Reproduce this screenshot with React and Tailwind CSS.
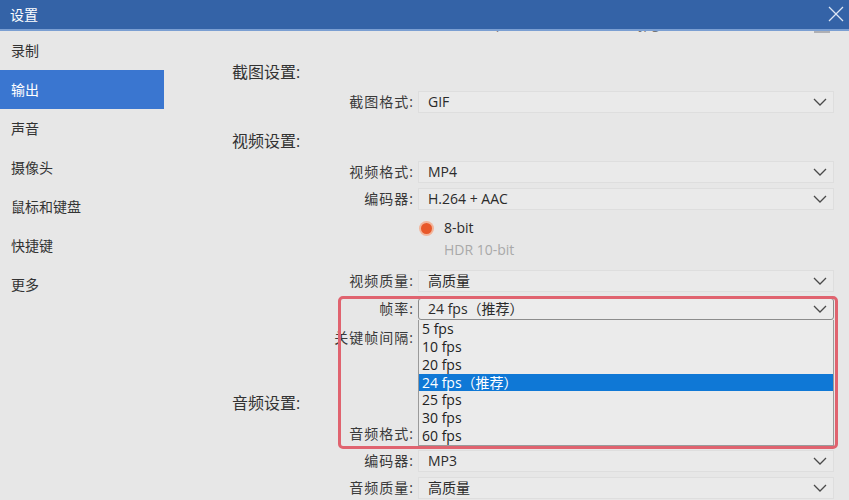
import React from "react";

const FONT = { fontFamily: '"Open Sans", "Noto Sans CJK SC", sans-serif' };

function Chevron() {
  return (
    <svg width="14" height="8" viewBox="0 0 14 8" className="shrink-0">
      <polyline points="1,1 7,7 13,1" fill="none" stroke="#4a4a4a" strokeWidth="1.3" />
    </svg>
  );
}

function Select({ value, open }) {
  return (
    <div
      className={
        "w-[416px] h-[22px] flex items-center justify-between pl-[9px] pr-[6px] " +
        (open
          ? "border border-[#8c8c8c] rounded-[3px] bg-[#ececec]"
          : "border border-[#dedede] bg-[#eaeaea]")
      }
    >
      <span className="text-[14px] text-[#2b2b2b] leading-none">{value}</span>
      <Chevron />
    </div>
  );
}

function Row({ label, value, mt, open, children }) {
  return (
    <div className={"relative flex items-center h-[22px] " + mt}>
      <div className="w-[250px] text-right text-[14px] tracking-[1px] text-[#3a3a3a] leading-none">{label}</div>
      <div className="ml-[4px]">{value !== undefined ? <Select value={value} open={open} /> : null}</div>
      {children}
    </div>
  );
}

const fpsList = ["5 fps", "10 fps", "20 fps", "24 fps（推荐）", "25 fps", "30 fps", "60 fps"];

export default function App() {
  const side = ["录制", "输出", "声音", "摄像头", "鼠标和键盘", "快捷键", "更多"];
  return (
    <div className="w-[849px] h-[500px] flex flex-col bg-[#e7e7e7] overflow-hidden" style={FONT}>
      <div className="h-[31px] shrink-0 bg-[#3463a7] border-b-2 border-[#7b9fd2] flex items-center justify-between pl-[10px]">
        <span className="text-white text-[14px] leading-none">设置</span>
        <svg width="24" height="24" viewBox="0 0 24 24" className="mr-[1px] -mt-[2px]">
          <line x1="5" y1="5" x2="19" y2="19" stroke="#dbe6f5" strokeWidth="1.2" />
          <line x1="19" y1="5" x2="5" y2="19" stroke="#dbe6f5" strokeWidth="1.2" />
        </svg>
      </div>
      <div className="flex flex-1 min-h-0">
        <aside className="w-[164px] shrink-0 flex flex-col">
          {side.map((s) => (
            <div
              key={s}
              className={
                "h-[39px] flex items-center pl-[11px] text-[14px] " +
                (s === "输出" ? "bg-[#3a76d0] text-white" : "text-[#333]")
              }
            >
              {s}
            </div>
          ))}
        </aside>
        <main className="flex-1 relative overflow-hidden flex flex-col">
          {/* cut-off row at top */}
          <div className="relative flex items-center h-[22px] -mt-[20px] opacity-60">
            <div className="w-[250px] text-right text-[14px] tracking-[1px] text-[#3a3a3a] leading-none">输出目录:</div>
            <div className="ml-[4px] w-[392px] h-[22px] flex items-center pl-[9px] text-[14px] text-[#2b2b2b]">
              C:/Users/Apowersoft/Videos/rec.jpg
            </div>
            <div className="w-[16px] h-[22px] ml-[4px] bg-[#8a8c92]" />
          </div>

          <div className="ml-[68px] mt-[27px] h-[24px] flex items-center text-[16px] text-[#333]">截图设置:</div>
          <Row label="截图格式:" value="GIF" mt="mt-[7px]" />

          <div className="ml-[68px] mt-[16px] h-[24px] flex items-center text-[16px] text-[#333]">视频设置:</div>
          <Row label="视频格式:" value="MP4" mt="mt-[8px]" />
          <Row label="编码器:" value="H.264 + AAC" mt="mt-[5px]" />

          <div className="mt-[8px] h-[20px] flex items-center pl-[255px]">
            <span className="w-[15px] h-[15px] rounded-full bg-[#f2b59b] flex items-center justify-center">
              <span className="w-[11px] h-[11px] rounded-full bg-[#e8582a]" />
            </span>
            <span className="ml-[10px] text-[14px] text-[#2b2b2b] leading-none">8-bit</span>
          </div>
          <div className="mt-[2px] h-[20px] flex items-center pl-[280px] text-[14px] text-[#a9a9a9] leading-none">
            HDR 10-bit
          </div>

          <Row label="视频质量:" value="高质量" mt="mt-[10px]" />
          <Row label="帧率:" value="24 fps（推荐）" mt="mt-[6px]" open>
            <div className="absolute left-[254px] top-[22px] w-[416px] h-[126px] z-10 bg-[#ebebeb] border-x border-b border-[#9a9a9a] flex flex-col">
              {fpsList.map((f) => (
                <div
                  key={f}
                  className={
                    "h-[18px] flex items-center pl-[3px] text-[14px] leading-none " +
                    (f === "24 fps（推荐）" ? "bg-[#0f78d6] text-white" : "text-[#222]")
                  }
                >
                  {f}
                </div>
              ))}
            </div>
          </Row>
          <Row label="关键帧间隔:" value="" mt="mt-[7px]" />

          <div className="ml-[68px] mt-[42px] h-[24px] flex items-center text-[16px] text-[#333]">音频设置:</div>
          <Row label="音频格式:" value="" mt="mt-[8px]" />
          <Row label="编码器:" value="MP3" mt="mt-[5px]" />
          <Row label="音频质量:" value="高质量" mt="mt-[5px]" />

          {/* red highlight */}
          <div className="absolute left-[174px] top-[265px] w-[500px] h-[153px] border-[3px] border-[#e0636f] rounded-[5px] z-20 pointer-events-none" />
        </main>
      </div>
    </div>
  );
}
